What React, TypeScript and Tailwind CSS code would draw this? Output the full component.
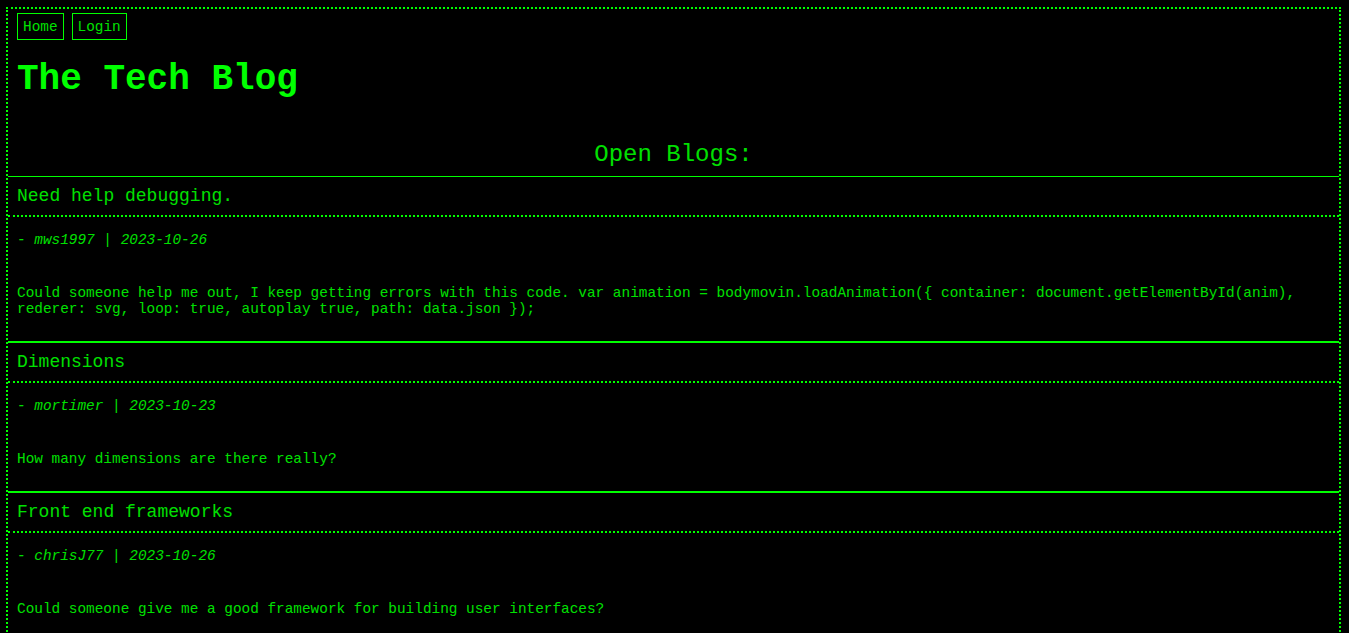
import React from "react";

const posts = [
  {
    title: "Need help debugging.",
    author: "mws1997",
    date: "2023-10-26",
    body: "Could someone help me out, I keep getting errors with this code. var animation = bodymovin.loadAnimation({ container: document.getElementById(anim), rederer: svg, loop: true, autoplay true, path: data.json });",
  },
  {
    title: "Dimensions",
    author: "mortimer",
    date: "2023-10-23",
    body: "How many dimensions are there really?",
  },
  {
    title: "Front end frameworks",
    author: "chrisJ77",
    date: "2023-10-26",
    body: "Could someone give me a good framework for building user interfaces?",
  },
];

export default function App() {
  return (
    <div className="min-h-screen bg-black pt-[7px] pl-[6px] font-['Liberation_Mono','Courier_New',monospace] text-[#00e000]">
      <div className="w-[1335px] border-2 border-dotted border-[#00ff00]">
        {/* Header */}
        <header className="px-[9px] pt-[4px]">
          <nav className="flex gap-[8px]">
            <a className="flex h-[27px] items-center border border-[#00ff00] px-[5px] text-[14.4px] leading-[normal]">Home</a>
            <a className="flex h-[27px] items-center border border-[#00ff00] px-[5px] text-[14.4px] leading-[normal]">Login</a>
          </nav>
          <h1 className="mt-[19px] text-[36px] font-bold leading-[normal] text-[#00ff00]">The Tech Blog</h1>
        </header>

        <h2 className="mt-[41px] mb-[8px] text-center text-[24px] leading-[normal]">Open Blogs:</h2>

        {/* Posts */}
        {posts.map((post) => (
          <article key={post.title} className="border-y border-[#00ff00]">
            <div className="border-b-2 border-dotted border-[#00ff00] p-[9px] text-[18px] leading-[normal]">
              {post.title}
            </div>
            <div className="px-[9px] pt-[15px] pb-[24px] text-[14.4px] leading-[normal]">
              <p className="italic">
                - {post.author} | {post.date}
              </p>
              <p className="mt-[37px]">{post.body}</p>
            </div>
          </article>
        ))}
      </div>
    </div>
  );
}
